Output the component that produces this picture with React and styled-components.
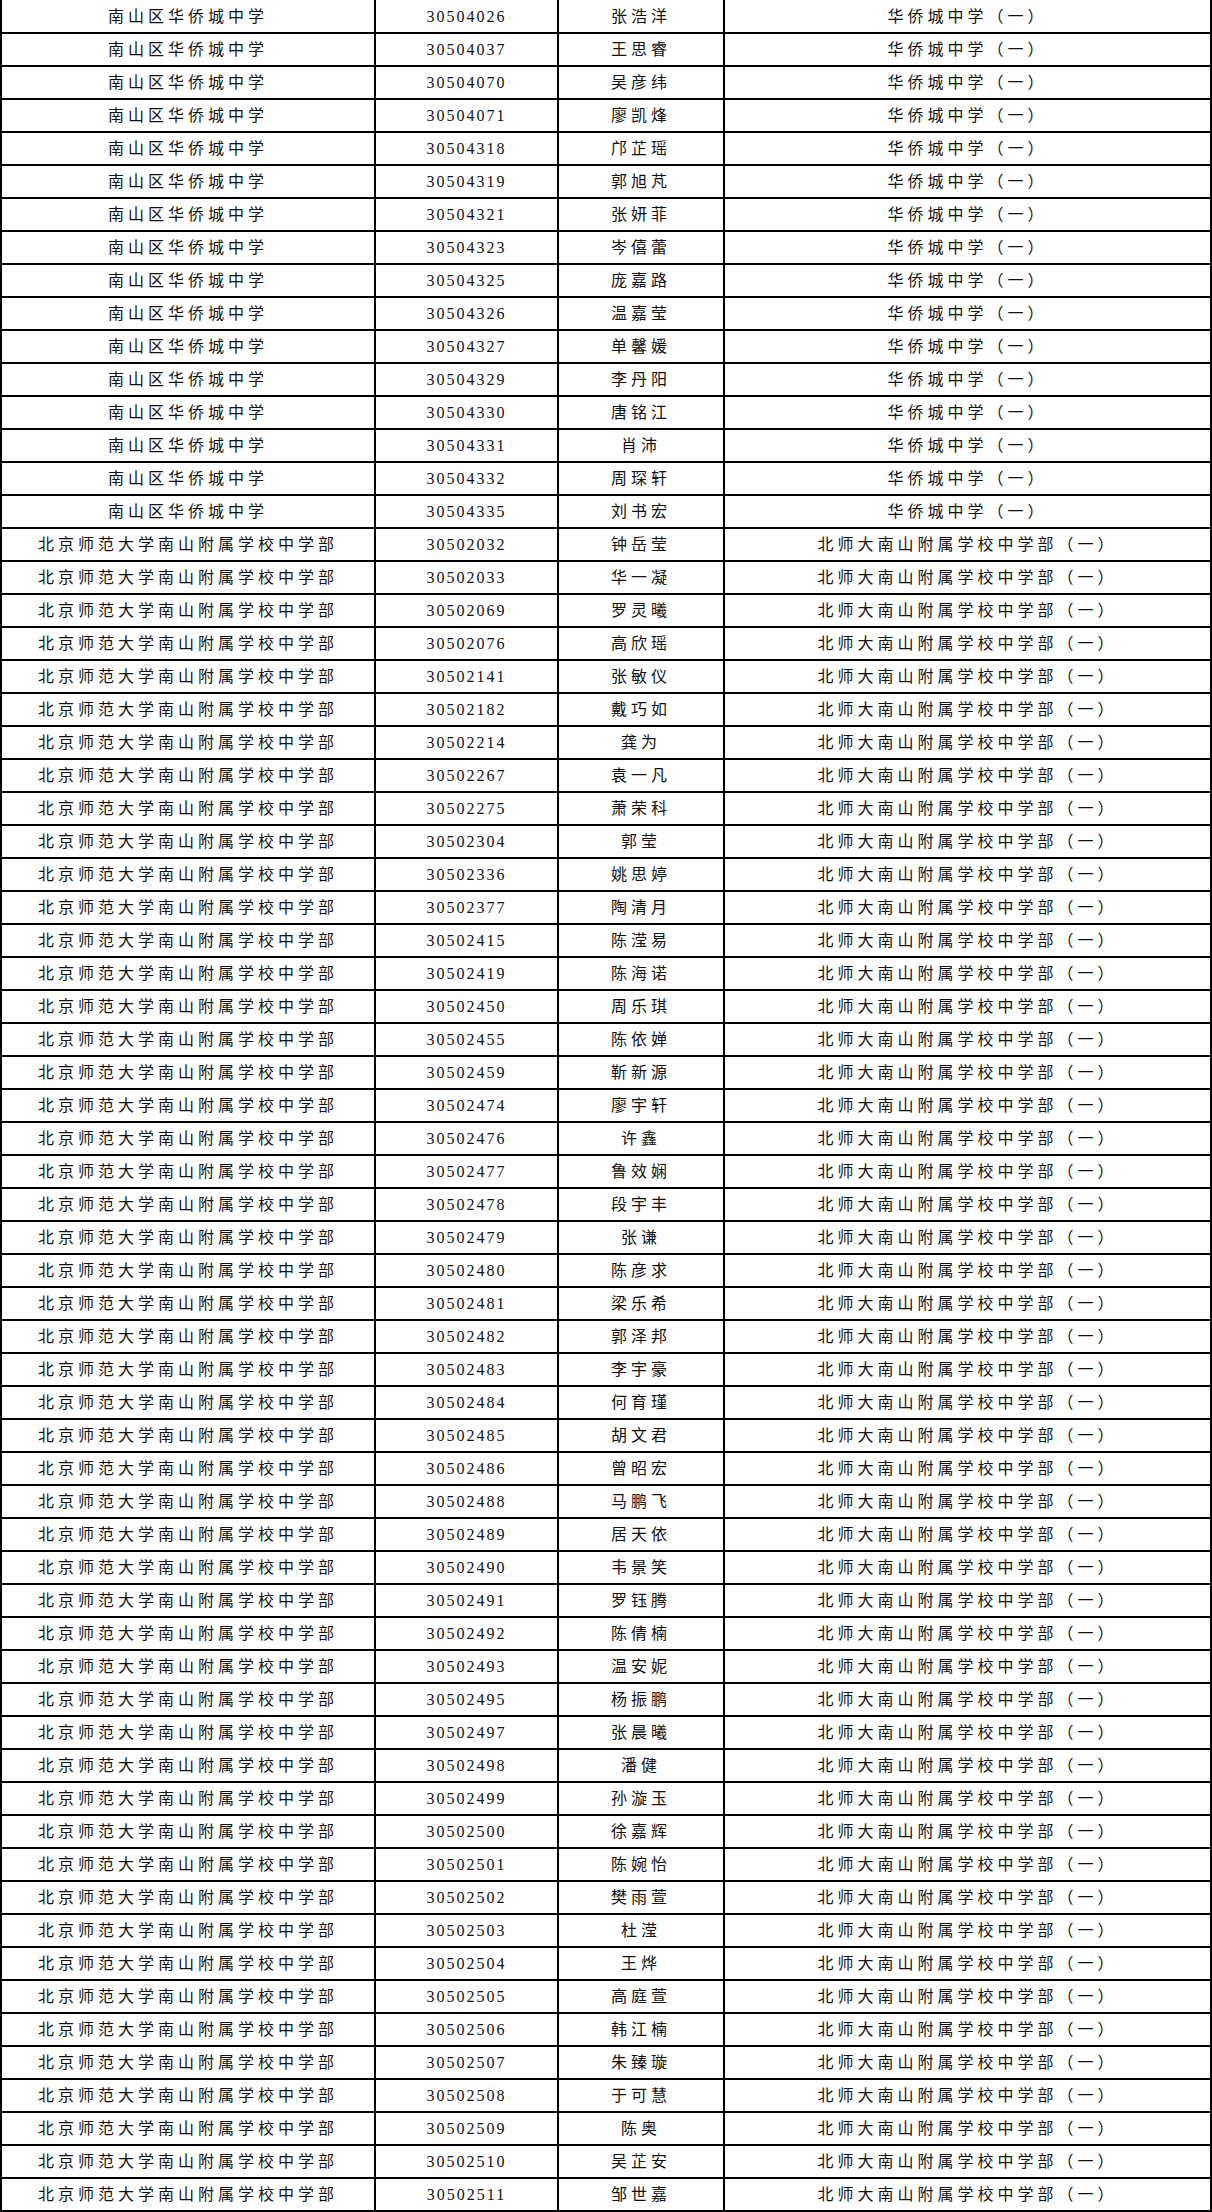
import React from 'react';
import styled, { createGlobalStyle } from 'styled-components';

const GlobalStyle = createGlobalStyle`
    html, body {
        margin: 0;
        padding: 0;
        background: #fff;
    }
    body {
        font-family: "Liberation Serif", "Noto Sans CJK SC", serif;
        color: #111;
    }
`;

const Sheet = styled.div`
    width: 1212px;
`;

const Row = styled.div`
    display: grid;
    grid-template-columns: 374px 183px 166px 489px;
    height: 31px;
    border-bottom: 2px solid #000;
    box-sizing: content-box;
    &:first-child {
        height: 32px;
    }
    & > div:last-child {
        border-right: 2px solid #000;
    }
`;

const Cell = styled.div`
    display: flex;
    align-items: center;
    justify-content: center;
    border-left: 2px solid #000;
    font-size: 16px;
    line-height: 1;
    padding-top: 1px;
    letter-spacing: ${p => p.$spacing || 4}px;
    white-space: nowrap;
    overflow: hidden;
`;

const huaqiao = [
    ['30504026', '张浩洋'], ['30504037', '王思睿'], ['30504070', '吴彦纬'], ['30504071', '廖凯烽'],
    ['30504318', '邝芷瑶'], ['30504319', '郭旭芃'], ['30504321', '张妍菲'], ['30504323', '岑僖蕾'],
    ['30504325', '庞嘉路'], ['30504326', '温嘉莹'], ['30504327', '单馨媛'], ['30504329', '李丹阳'],
    ['30504330', '唐铭江'], ['30504331', '肖沛'], ['30504332', '周琛轩'], ['30504335', '刘书宏'],
];

const beishida = [
    ['30502032', '钟岳莹'], ['30502033', '华一凝'], ['30502069', '罗灵曦'], ['30502076', '高欣瑶'],
    ['30502141', '张敏仪'], ['30502182', '戴巧如'], ['30502214', '龚为'], ['30502267', '袁一凡'],
    ['30502275', '萧荣科'], ['30502304', '郭莹'], ['30502336', '姚思婷'], ['30502377', '陶清月'],
    ['30502415', '陈滢易'], ['30502419', '陈海诺'], ['30502450', '周乐琪'], ['30502455', '陈依婵'],
    ['30502459', '靳新源'], ['30502474', '廖宇轩'], ['30502476', '许鑫'], ['30502477', '鲁效娴'],
    ['30502478', '段宇丰'], ['30502479', '张谦'], ['30502480', '陈彦求'], ['30502481', '梁乐希'],
    ['30502482', '郭泽邦'], ['30502483', '李宇豪'], ['30502484', '何育瑾'], ['30502485', '胡文君'],
    ['30502486', '曾昭宏'], ['30502488', '马鹏飞'], ['30502489', '居天依'], ['30502490', '韦景笑'],
    ['30502491', '罗钰腾'], ['30502492', '陈倩楠'], ['30502493', '温安妮'], ['30502495', '杨振鹏'],
    ['30502497', '张晨曦'], ['30502498', '潘健'], ['30502499', '孙漩玉'], ['30502500', '徐嘉辉'],
    ['30502501', '陈婉怡'], ['30502502', '樊雨萱'], ['30502503', '杜滢'], ['30502504', '王烨'],
    ['30502505', '高庭萱'], ['30502506', '韩江楠'], ['30502507', '朱臻璇'], ['30502508', '于可慧'],
    ['30502509', '陈奥'], ['30502510', '吴芷安'], ['30502511', '邹世嘉'],
];

const rows = [
    ...huaqiao.map(([id, name]) => ({ school: '南山区华侨城中学', id, name, room: '华侨城中学（一）' })),
    ...beishida.map(([id, name]) => ({ school: '北京师范大学南山附属学校中学部', id, name, room: '北师大南山附属学校中学部（一）' })),
];

function App() {
    return (
        <>
            <GlobalStyle />
            <Sheet>
                {rows.map(r => (
                    <Row key={r.id}>
                        <Cell>{r.school}</Cell>
                        <Cell $spacing={2}>{r.id}</Cell>
                        <Cell>{r.name}</Cell>
                        <Cell>{r.room}</Cell>
                    </Row>
                ))}
            </Sheet>
        </>
    );
}

export default App;
